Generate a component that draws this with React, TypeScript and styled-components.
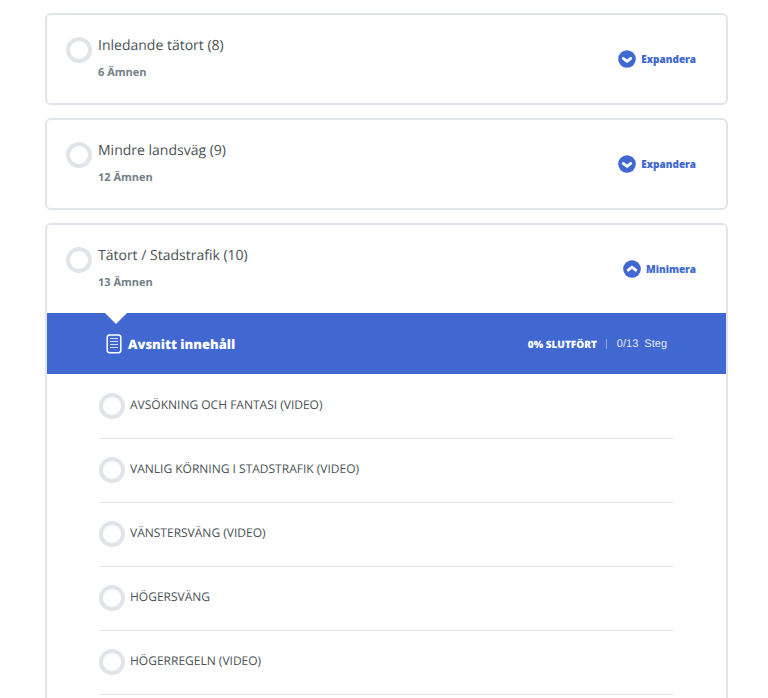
import React, { useState } from 'react';
import styled, { createGlobalStyle } from 'styled-components';

const BLUE = '#4068d0';
const BORDER = '#e0e5eb';

const GlobalStyle = createGlobalStyle`
  * { box-sizing: border-box; }
  body {
    margin: 0;
    background: #fff;
    font-family: 'Open Sans', 'Noto Sans', sans-serif;
    color: #495255;
    text-rendering: geometricPrecision;
  }
`;

const Page = styled.main`
  display: flex;
  flex-direction: column;
  gap: 13px;
  height: 100vh;
  overflow: hidden;
  padding: 13px 40px 0 45px;
`;

const Card = styled.section`
  flex: none;
  border: 2px solid ${BORDER};
  border-radius: 6px;
  background: #fff;
`;

const CardHeader = styled.header`
  display: flex;
  align-items: center;
  height: 88px;
  padding: 0 30px 0 19px;
`;

const LessonLink = styled.a`
  display: flex;
  flex: 1;
  align-items: flex-start;
  gap: 6px;
  color: inherit;
  text-decoration: none;
`;

const StatusRing = styled.span`
  flex: none;
  width: 26px;
  height: 26px;
  border: 4px solid ${BORDER};
  border-radius: 50%;
`;

const LessonText = styled.span`
  display: flex;
  flex-direction: column;
  gap: 10px;
`;

const LessonTitle = styled.span`
  font-size: 14px;
  line-height: 18px;
`;

const LessonMeta = styled.span`
  font-size: 11px;
  line-height: 16px;
  font-weight: 700;
  color: #728188;
`;

const ToggleButton = styled.button`
  display: flex;
  align-items: center;
  gap: 5px;
  padding: 0;
  border: 0;
  background: none;
  color: ${BLUE};
  font: 800 10px/18px 'Open Sans', 'Noto Sans', sans-serif;
  cursor: pointer;
`;

const ContentBar = styled.div`
  position: relative;
  display: flex;
  align-items: center;
  justify-content: space-between;
  height: 61px;
  padding: 0 59px;
  background: ${BLUE};
  color: #fff;

  &::before {
    content: '';
    position: absolute;
    top: 0;
    left: 58px;
    border: solid transparent;
    border-width: 11px 11px 0;
    border-top-color: #fff;
  }
`;

const BarTitle = styled.h2`
  display: flex;
  align-items: center;
  gap: 6px;
  margin: 0;
  font-size: 13px;
  line-height: 20px;
  font-weight: 800;
`;

const Progress = styled.div`
  display: flex;
  align-items: center;
  font-size: 10px;
  line-height: 16px;
`;

const Percent = styled.span`
  font-weight: 800;
`;

const Divider = styled.span`
  width: 1px;
  height: 10px;
  margin: 0 10px 0 9px;
  background: #8fa8e5;
`;

const Steps = styled.span`
  font-family: 'Liberation Sans', Arial, sans-serif;
  font-size: 11px;
  color: #e3e9f8;
  white-space: pre;
`;

const TopicList = styled.ul`
  margin: 0;
  padding: 1px 52px 20px;
  list-style: none;
`;

const TopicItem = styled.li`
  border-bottom: 1px solid ${BORDER};
`;

const TopicLink = styled.a`
  display: flex;
  gap: 5px;
  padding: 18px 0 19px;
  color: inherit;
  font-size: 12px;
  line-height: 24px;
  text-decoration: none;
`;

const ChevronIcon = ({ up }: { up: boolean }) => (
  <svg width="18" height="18" viewBox="0 0 18 18" aria-hidden="true">
    <circle cx="9" cy="9" r="8.8" fill={BLUE} />
    <path
      d={up ? 'M5.2 10.2 9 7.2l3.8 3' : 'M5.2 8.4 9 11.4l3.8-3'}
      fill="none"
      stroke="#fff"
      strokeWidth="2.8"
      strokeLinecap="round"
      strokeLinejoin="round"
    />
  </svg>
);

const DocumentIcon = () => (
  <svg width="16" height="20" viewBox="0 0 16 20" fill="none" stroke="#fff" aria-hidden="true">
    <rect x="1.2" y="0.9" width="13.6" height="17.8" rx="2.4" strokeWidth="1.5" />
    <path d="M4 4.5h8M4 7.5h8M4 10.5h8M4 13.5h8" strokeWidth="1" opacity="0.75" />
  </svg>
);

interface Lesson {
  title: string;
  count: number;
  topics: string[];
}

const lessons: Lesson[] = [
  { title: 'Inledande tätort (8)', count: 6, topics: [] },
  { title: 'Mindre landsväg (9)', count: 12, topics: [] },
  {
    title: 'Tätort / Stadstrafik (10)',
    count: 13,
    topics: [
      'AVSÖKNING OCH FANTASI (VIDEO)',
      'VANLIG KÖRNING I STADSTRAFIK (VIDEO)',
      'VÄNSTERSVÄNG (VIDEO)',
      'HÖGERSVÄNG',
      'HÖGERREGELN (VIDEO)',
    ],
  },
];

const LessonCard = ({ lesson }: { lesson: Lesson }) => {
  const [open, setOpen] = useState(lesson.topics.length > 0);
  return (
    <Card>
      <CardHeader>
        <LessonLink href="#">
          <StatusRing />
          <LessonText>
            <LessonTitle>{lesson.title}</LessonTitle>
            <LessonMeta>{lesson.count} Ämnen</LessonMeta>
          </LessonText>
        </LessonLink>
        <ToggleButton type="button" aria-expanded={open} onClick={() => setOpen(!open)}>
          <ChevronIcon up={open} />
          {open ? 'Minimera' : 'Expandera'}
        </ToggleButton>
      </CardHeader>
      {open && (
        <>
          <ContentBar>
            <BarTitle>
              <DocumentIcon />
              Avsnitt innehåll
            </BarTitle>
            <Progress>
              <Percent>0% SLUTFÖRT</Percent>
              <Divider />
              <Steps>{`0/${lesson.count}  Steg`}</Steps>
            </Progress>
          </ContentBar>
          <TopicList>
            {lesson.topics.map((topic) => (
              <TopicItem key={topic}>
                <TopicLink href="#">
                  <StatusRing />
                  {topic}
                </TopicLink>
              </TopicItem>
            ))}
          </TopicList>
        </>
      )}
    </Card>
  );
};

export default function App() {
  return (
    <>
      <GlobalStyle />
      <Page>
        {lessons.map((lesson) => (
          <LessonCard key={lesson.title} lesson={lesson} />
        ))}
      </Page>
    </>
  );
}
